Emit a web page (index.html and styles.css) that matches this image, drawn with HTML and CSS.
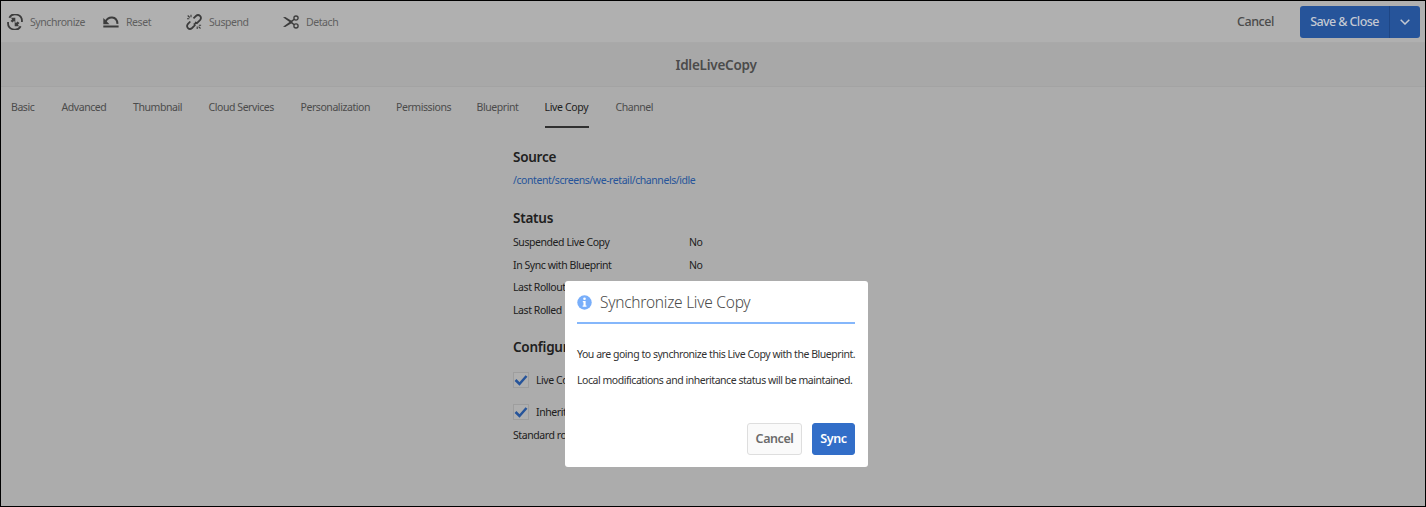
FILE: index.html
```html
<!DOCTYPE html>
<html lang="en">
<head>
<meta charset="utf-8">
<title>IdleLiveCopy</title>
<link rel="stylesheet" href="styles.css">
</head>
<body>
<div class="page">
  <header class="toolbar">
    <div class="actions">
      <div class="action">
        <svg class="icon" viewBox="0 0 16 16" fill="none" stroke="currentColor" stroke-width="1.8"><path d="M2.300 3.700A6.800 6.800 0 0 1 14.900 8M13.700 12.300A6.800 6.800 0 0 1 1.100 8"/><path d="M3.800 3.800h4.500v4.500L7 7 5.500 8.500 3.500 7l1.700-1.700zM12.200 12.200H7.700V7.700L9 9l1.500-1.500L12.500 9l-1.700 1.700z" fill="currentColor" stroke="none"/></svg>
        <span>Synchronize</span>
      </div>
      <div class="action">
        <svg class="icon" viewBox="0 0 16 16" fill="none" stroke="currentColor" stroke-width="2"><path d="M2.500 7.800C5 2.200 13.800 1.500 14.500 9.800"/><path d="M.3 4v6.200h6.200z" fill="currentColor" stroke="none"/><path d="M.3 12.500h15.300"/></svg>
        <span>Reset</span>
      </div>
      <div class="action">
        <svg class="icon" viewBox="0 0 16 16" fill="none" stroke="currentColor" stroke-width="1.800"><path d="M7.500 4.300l2.400-2.300c3-2.500 6.600 1.100 4.100 4.100L10.900 9.100 8.900 8.300M4.300 7.500l-2.300 2.400c-2.500 3 1.100 6.600 4.100 4.100l2.700-2.700-.5-2"/><path stroke-width="1.100" d="M5 .8v2.400M1 4.700h2.300M1.700 1.500l2 2M11.200 12.600V15M12.800 11.200h2.300M12.600 12.600l1.900 1.900"/></svg>
        <span>Suspend</span>
      </div>
      <div class="action">
        <svg class="icon" viewBox="0 0 16 16" fill="none" stroke="currentColor" stroke-width="1.300"><circle cx="13" cy="4.100" r="2.100"/><circle cx="13" cy="11.900" r="2.100"/><path d="M11.200 5.400L7.800 7.800M11.200 10.600L7.800 8.200"/><path d="M0 3.200l2.300-.3 7.400 4.500v1.200l-7.400 4.500-2.300-.3L6.500 8z" fill="currentColor" stroke="none"/></svg>
        <span>Detach</span>
      </div>
    </div>
    <div class="finish">
      <span class="finish-cancel">Cancel</span>
      <div class="split">
        <span class="split-main">Save &amp; Close</span>
        <span class="split-more"><svg viewBox="0 0 10 6" fill="none" stroke="currentColor" stroke-width="1.500"><path d="M.7.700L5 5 9.300.700"/></svg></span>
      </div>
    </div>
  </header>
  <div class="titlebar"><h1>IdleLiveCopy</h1></div>
  <nav class="tabs">
    <span><b>Basic</b></span><span><b>Advanced</b></span><span><b>Thumbnail</b></span><span><b>Cloud Services</b></span><span><b>Personalization</b></span><span><b>Permissions</b></span><span><b>Blueprint</b></span><span class="active"><b>Live Copy</b></span><span><b>Channel</b></span>
  </nav>
  <main class="details">
    <h2>Source</h2>
    <a class="path">/content/screens/we-retail/channels/idle</a>
    <h2 class="status">Status</h2>
    <dl>
      <dt>Suspended Live Copy</dt><dd>No</dd>
      <dt>In Sync with Blueprint</dt><dd>No</dd>
      <dt>Last Rollout</dt><dd></dd>
      <dt>Last Rolled</dt><dd></dd>
    </dl>
    <h2 class="config">Configur</h2>
    <div class="check"><i><svg viewBox="0 0 14 12"><path d="M1.500 6l4 4 7-8" /></svg></i>Live Co</div>
    <div class="check"><i><svg viewBox="0 0 14 12"><path d="M1.500 6l4 4 7-8" /></svg></i>Inherit</div>
    <p class="standard">Standard ro</p>
  </main>
</div>
<section class="dialog">
  <div class="dialog-head">
    <svg viewBox="0 0 16 16"><circle cx="8" cy="8" r="7.700" fill="#78aefa"/><circle cx="8" cy="4" r="1.400" fill="#fff"/><path d="M6.200 6.300h3v5h.9v1.300H6v-1.300h.9V7.600h-.7z" fill="#fff"/></svg>
    <h3>Synchronize Live Copy</h3>
  </div>
  <p class="line-one">You are going to synchronize this Live Copy with the Blueprint.</p>
  <p class="line-two">Local modifications and inheritance status will be maintained.</p>
  <div class="buttons"><span class="cancel">Cancel</span><span class="primary">Sync</span></div>
</section>
</body>
</html>
```
FILE: styles.css
```css
* { box-sizing: border-box; }
body { margin: 0; font: 10.5px/16px "Noto Sans", "Open Sans", sans-serif; letter-spacing: -.43px; }
h1, h2, h3, p, dl, dd { margin: 0; }
span, h1, h2, h3, p, dt, a { white-space: nowrap; }
.page { width: 1426px; height: 507px; border: 1px solid #000; background: #acacac; color: #202020; overflow: hidden; }
.toolbar { height: 42px; display: flex; justify-content: space-between; background: #b0b0b0; border-bottom: 1px solid #a9a9a9; }
.actions { display: grid; grid-template-columns: 96px 83px 97px 80px; align-items: center; padding-left: 6px; color: #5f5f5f; }
.action { display: flex; align-items: center; gap: 7px; }
.icon { width: 16px; height: 16px; color: #3c3c3c; flex: none; }
.finish { display: flex; align-items: center; padding-right: 5px; gap: 26px; font-size: 12.5px; font-weight: 500; }
.finish-cancel { color: #4b4b4b; }
.split { display: flex; width: 120px; height: 32px; border-radius: 3px; background: #26549a; color: #c4c9d2; align-items: center; letter-spacing: -.6px; }
.split-main { width: 89px; text-align: center; }
.split-more { width: 31px; height: 32px; border-left: 1px solid #1e4685; display: grid; place-items: center; }
.split-more svg { width: 10px; height: 6px; }
.titlebar { height: 44px; border-bottom: 1px solid #a3a3a3; background: #a8a8a8; display: grid; place-items: center; color: #4b4b4b; padding-left: 6px; }
h1 { font-size: 13.500px; font-weight: 600; letter-spacing: -.25px; }
.tabs { height: 41px; display: grid; grid-template-columns: 50.500px 71.500px 75.500px 92px 95.500px 80.500px 68px 71px 60px; padding-left: 10px; color: #4b4b4b; }
.tabs b { display: inline-block; height: 41px; padding-top: 12px; font-weight: 400; }
.tabs .active b { width: 44px; letter-spacing: -.35px; color: #202020; border-bottom: 2px solid #303030; }
.details { padding-left: 512px; }
h2 { font-size: 13.500px; line-height: 20px; font-weight: 600; margin-top: 19px; letter-spacing: -.25px; }
.path { display: block; color: #26549a; margin-top: 5px; }
.status { margin-top: 20px; }
dl { display: grid; grid-template-columns: 176px 60px; grid-auto-rows: 22.600px; margin-top: 6px; }
.config { margin-top: 13px; }
.check { display: flex; align-items: center; gap: 7px; height: 16px; margin-top: 16px; }
.config + .check { margin-top: 15px; }
.check i { width: 16px; height: 16px; border: 1px solid #9e9e9e; background: #afafaf; display: grid; place-items: center; }
.check svg { width: 14px; height: 12px; fill: none; stroke: #26549a; stroke-width: 2.500; }
.standard { margin-top: 7px; }
.dialog { position: absolute; left: 565px; top: 281px; width: 303px; height: 186px; border-radius: 3px; background: #fff; padding: 0 13px 0 12px; color: #323232; }
.dialog-head { height: 43px; border-bottom: 2px solid #85b7fb; display: flex; align-items: center; gap: 8px; padding-top: 1px; }
.dialog-head svg { width: 15px; height: 15px; }
h3 { font-size: 15.500px; font-weight: 300; color: #4b4b4b; letter-spacing: -.25px; }
.line-one { margin-top: 22px; }
.line-two { margin-top: 10px; }
.dialog p { letter-spacing: -.46px; }
.buttons { display: flex; justify-content: flex-end; gap: 10px; margin-top: 35px; font-size: 12.500px; font-weight: 600; }
.buttons span { height: 32px; line-height: 30px; text-align: center; border: 1px solid; border-radius: 3px; }
.cancel { width: 55px; background: #fafafa; border-color: #dedede !important; color: #6b6b6b; }
.primary { width: 43px; background: #326ec8; border-color: #326ec8 !important; color: #fff; }
```
